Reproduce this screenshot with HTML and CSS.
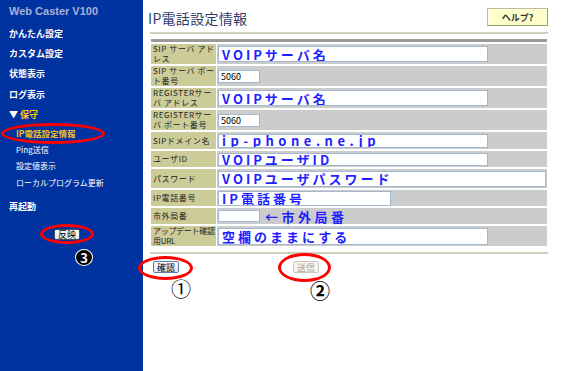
FILE: index.html
```html
<!DOCTYPE html>
<html lang="ja">
<head>
<meta charset="utf-8">
<title>IP電話設定情報</title>
<link rel="stylesheet" href="styles.css">
</head>
<body>
<div class="page">
  <nav class="side">
    <div class="brand">Web Caster V100</div>
    <ul class="menu">
      <li class="item">かんたん設定</li>
      <li class="item">カスタム設定</li>
      <li class="item">状態表示</li>
      <li class="item">ログ表示</li>
      <li class="item open"><span class="tri">▼</span> 保守</li>
    </ul>
    <ul class="sub">
      <li class="cur">IP電話設定情報</li>
      <li>Ping送信</li>
      <li>設定値表示</li>
      <li>ローカルプログラム更新</li>
    </ul>
    <div class="item reboot">再起動</div>
    <div class="apply-wrap"><button class="btn apply">反映</button></div>
  </nav>
  <main class="main">
    <header class="head">
      <h1 class="title">IP電話設定情報</h1>
      <button class="help">ヘルプ?</button>
    </header>
    <div class="rule"></div>
    <div class="bar"></div>
    <div class="form">
      <div class="lbl">SIP サーバ アド<br>レス</div>
      <div class="val"><input class="txt w-big h16" value="VOIPサーバ名"></div>

      <div class="lbl">SIP サーバ ポー<br>ト番号</div>
      <div class="val"><input class="txt num w-sm h13" value="5060"></div>

      <div class="lbl">REGISTERサー<br>バ アドレス</div>
      <div class="val"><input class="txt w-big h16" value="VOIPサーバ名"></div>

      <div class="lbl">REGISTERサー<br>バ ポート番号</div>
      <div class="val"><input class="txt num w-sm h13" value="5060"></div>

      <div class="lbl">SIPドメイン名</div>
      <div class="val"><input class="txt wide-ls w-big h14" value="ip-phone.ne.jp"></div>

      <div class="lbl">ユーザID</div>
      <div class="val"><input class="txt w-big h13" value="VOIPユーザID"></div>

      <div class="lbl">パスワード</div>
      <div class="val"><input class="txt w-pass h16" value="VOIPユーザパスワード"></div>

      <div class="lbl">IP電話番号</div>
      <div class="val"><input class="txt w-mid h15" value="IP電話番号"></div>

      <div class="lbl">市外局番</div>
      <div class="val"><input class="txt w-sm h12" value=""><span class="note">←市外局番</span></div>

      <div class="lbl tight">アップデート確認<br>用URL</div>
      <div class="val"><input class="txt w-big h17" value="空欄のままにする"></div>
    </div>
    <div class="rule rule-bottom"></div>
    <div class="actions">
      <button class="btn">確認</button>
      <button class="btn" disabled>送信</button>
    </div>
  </main>
</div>

<div class="ring ring-menu"></div>
<div class="ring ring-apply"></div>
<div class="ring ring-confirm"></div>
<div class="ring ring-send"></div>
<span class="num-mark mark-1">①</span>
<span class="num-mark mark-2">②</span>
<span class="num-mark mark-3">3</span>
</body>
</html>
```

FILE: styles.css
```css
html, body {
  margin: 0;
  padding: 0;
  background: #fff;
}
body {
  position: relative;
  width: 565px;
  height: 371px;
  overflow: hidden;
  font-family: "Noto Sans CJK JP", sans-serif;
}
.page {
  display: flex;
  height: 371px;
}

/* ---------- sidebar ---------- */
.side {
  width: 143px;
  flex: none;
  box-sizing: border-box;
  background: #0033a0;
  padding: 4px 0 0 9px;
}
.brand {
  font: bold 11px/14px "Liberation Sans", sans-serif;
  color: #a8b0d4;
  margin-bottom: 6px;
}
.menu, .sub {
  list-style: none;
  margin: 0;
  padding: 0;
}
.item {
  font-size: 9px;
  line-height: 20.2px;
  font-weight: bold;
  color: #fff;
}
.open {
  color: #ffcc00;
}
.tri {
  color: #fff;
}
.sub {
  padding-left: 7px;
}
.sub li {
  font-size: 8px;
  line-height: 16.5px;
  color: #fff;
}
.sub .cur {
  color: #f0c020;
  font-weight: bold;
  font-size: 8.5px;
}
.reboot {
  margin-top: 6px;
}
.apply-wrap {
  display: flex;
  margin-top: 12px;
  padding-left: 45px;
}

/* ---------- buttons ---------- */
.btn {
  box-sizing: border-box;
  height: 12px;
  padding: 0 3px;
  margin: 0;
  font-family: "Noto Sans CJK JP", sans-serif;
  font-size: 9px;
  line-height: 9px;
  color: #000;
  border: 1px solid #5b7ea8;
  border-radius: 2px;
  background: linear-gradient(#ffffff, #e2e6ee);
}
.btn:disabled {
  color: #aca899;
  border-color: #cac8bb;
  background: #f5f4ee;
}
.apply {
  height: 11px;
  border-color: #3c4f6a;
  background: linear-gradient(#ffffff, #e8e8e4);
}

/* ---------- main ---------- */
.main {
  flex: 1;
  padding: 0 17px 0 7px;
}
.head {
  height: 32px;
  display: flex;
  justify-content: space-between;
  align-items: flex-start;
}
.title {
  margin: 10px 0 0 -2px;
  font-size: 14px;
  line-height: 16px;
  font-weight: normal;
  letter-spacing: 0.3px;
  color: #2d3e6e;
}
.help {
  margin-top: 8px;
  width: 61px;
  height: 18px;
  padding: 0;
  font-family: "Noto Sans CJK JP", sans-serif;
  font-size: 9px;
  font-weight: bold;
  color: #333;
  background: #ffffcc;
  border: 1px solid #c2be92;
  border-right-color: #9e9a72;
  border-bottom-color: #9e9a72;
  box-shadow: inset 1px 1px 0 #fffff0;
}
.rule {
  border-top: 2px solid #d2cfbc;
}
.bar {
  height: 3px;
  margin: 5px 1px 0;
  background: #999;
}
.form {
  display: grid;
  grid-template-columns: 65px 330px;
  grid-template-rows: 20px 20px 20px 20px 17px 16px 19px 16px 16px 20px;
  column-gap: 1px;
  row-gap: 2px;
  margin: 2px 1px 0;
}
.lbl {
  background: #cccc99;
  font-size: 8px;
  line-height: 10px;
  letter-spacing: 0.6px;
  padding-left: 2px;
  white-space: nowrap;
  overflow: hidden;
  color: #222;
  display: flex;
  align-items: center;
}
.lbl.tight {
  letter-spacing: -0.3px;
}
.val {
  background: #cccccc;
  padding-left: 1px;
  display: flex;
  align-items: center;
}
.txt {
  box-sizing: border-box;
  margin: 0;
  padding: 0 0 0 3px;
  border: 1px solid #a3b7cf;
  background: #fff;
  font-family: "Noto Sans CJK JP", sans-serif;
  font-size: 13px;
  font-weight: bold;
  letter-spacing: 3px;
  color: #1f1fff;
  line-height: 1;
}
.txt.wide-ls {
  letter-spacing: 4.5px;
}
.txt.num {
  font-size: 9px;
  font-weight: normal;
  letter-spacing: 0;
  color: #000;
  padding-left: 2px;
}
.w-big { width: 270px; }
.w-pass { width: 328px; }
.w-mid { width: 173px; }
.w-sm { width: 42px; }
.h12 { height: 12px; }
.h13 { height: 13px; }
.h14 { height: 14px; }
.h15 { height: 15px; }
.h16 { height: 16px; }
.h17 { height: 17px; }
.note {
  margin-left: 5px;
  font-size: 13px;
  font-weight: bold;
  letter-spacing: 3.5px;
  color: #1f1fff;
  line-height: 1;
}
.rule-bottom {
  margin-top: 6px;
}
.actions {
  margin-top: 7px;
  padding-left: 3px;
  display: flex;
  gap: 114px;
}

/* ---------- annotations (overlay) ---------- */
.ring {
  position: absolute;
  box-sizing: border-box;
  border: 3px solid #ff0000;
  border-radius: 50%;
}
.ring-menu { left: 1px; top: 123px; width: 104px; height: 21px; }
.ring-apply { left: 40px; top: 224px; width: 54px; height: 20px; }
.ring-confirm { left: 138px; top: 256px; width: 55px; height: 24px; }
.ring-send { left: 278px; top: 253px; width: 53px; height: 29px; }
.num-mark {
  position: absolute;
  font-family: "Noto Sans CJK JP", sans-serif;
  font-size: 20px;
  line-height: 20px;
  color: #000;
}
.mark-1 { left: 171px; top: 279px; }
.mark-2 { left: 310px; top: 281px; font-weight: bold; }
.mark-3 {
  left: 75px;
  top: 249px;
  width: 18px;
  height: 17px;
  box-sizing: border-box;
  border: 1px solid #fff;
  border-radius: 50%;
  background: #000;
  color: #fff;
  font-size: 13px;
  line-height: 15px;
  font-weight: bold;
  text-align: center;
}
```
